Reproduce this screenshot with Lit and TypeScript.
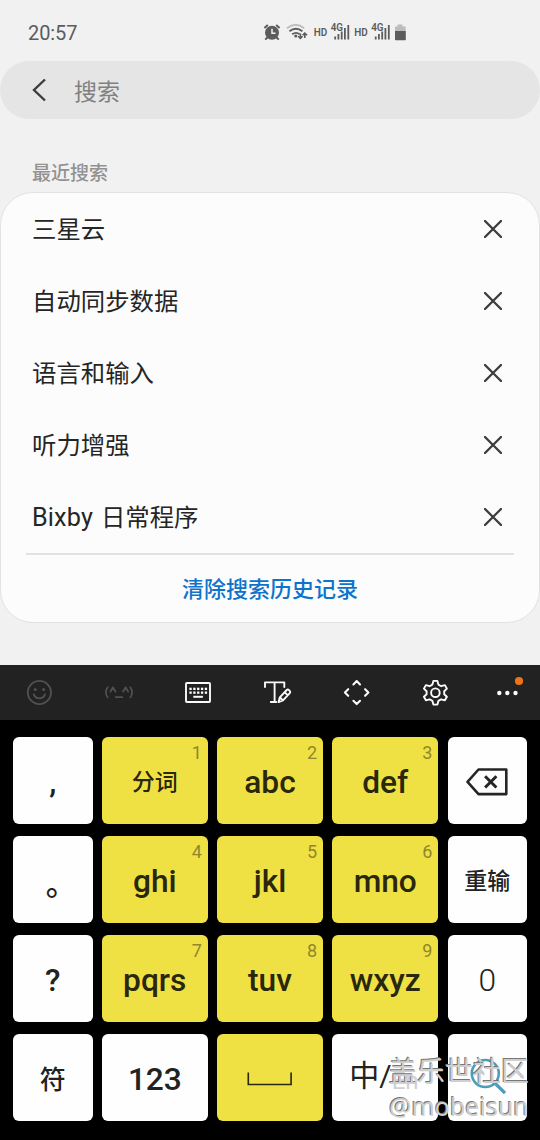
import { LitElement, html, svg, css } from "lit";
import { customElement } from "lit/decorators.js";
import { classMap } from "lit/directives/class-map.js";

interface Key {
  label?: string;
  num?: string;
  kind?: string;
  icon?: "backspace" | "space" | "search";
  accent?: boolean;
}

const RECENT = ["三星云", "自动同步数据", "语言和输入", "听力增强", "Bixby 日常程序"];

const KEYS: Key[] = [
  { label: ",", kind: "comma" },
  { label: "分词", num: "1", kind: "cjk", accent: true },
  { label: "abc", num: "2", accent: true },
  { label: "def", num: "3", accent: true },
  { icon: "backspace" },
  { label: "。", kind: "stop" },
  { label: "ghi", num: "4", accent: true },
  { label: "jkl", num: "5", accent: true },
  { label: "mno", num: "6", accent: true },
  { label: "重输", kind: "cjk" },
  { label: "?", kind: "question" },
  { label: "pqrs", num: "7", accent: true },
  { label: "tuv", num: "8", accent: true },
  { label: "wxyz", num: "9", accent: true },
  { label: "0", kind: "zero" },
  { label: "符", kind: "symbol" },
  { label: "123", kind: "digits" },
  { icon: "space", accent: true },
  { kind: "lang" },
  { icon: "search" },
];

@customElement("status-bar")
class StatusBar extends LitElement {
  static styles = css`
    :host { display: flex; height: 61px; font-family: Roboto, sans-serif; color: #5c5c5c; }
    .time { padding: 21px 0 0 28px; width: 235px; box-sizing: border-box; font-size: 20px; line-height: 24px; letter-spacing: -0.1px; }
    svg { display: block; margin-left: 20px; }
    text { font-family: Roboto, sans-serif; font-weight: 600; fill: #5c5c5c; }
  `;
  signal(x: number) {
    return svg`<g transform="translate(${x} 0)">
      <text x="0" y="35.7" font-size="10.5" textLength="13.5" lengthAdjust="spacingAndGlyphs">HD</text>
      <text x="17" y="31.2" font-size="10.5" textLength="12.4" lengthAdjust="spacingAndGlyphs">4G</text>
      <path d="M21.5 39.5v-3M24.7 39.5v-5.5M28 39.5v-8M31.2 39.5v-11.5M34.6 39.5v-14.5" stroke="#5c5c5c" stroke-width="1.8"/>
    </g>`;
  }
  render() {
    return html`
      <div class="time">20:57</div>
      <svg width="160" height="61" viewBox="255 0 160 61" fill="none">
        <circle cx="272" cy="32.7" r="7" fill="#5c5c5c"/>
        <path d="M272 28.7v4.6h3.5" stroke="#f1f1f1" stroke-width="1.5"/>
        <path d="M264.4 28l3.4-3M279.6 28l-3.4-3" stroke="#5c5c5c" stroke-width="2"/>
        <path d="M267.3 37.5l-2 2.2M276.7 37.5l2 2.2" stroke="#5c5c5c" stroke-width="2"/>
        <path d="M287 28.2q8.6-6.8 17.2 0" stroke="#bdbdbd" stroke-width="2"/>
        <path d="M289.4 31.2q6.5-4.8 13 0M292.2 34.3q4-2.8 7.4 0" stroke="#5c5c5c" stroke-width="1.9"/>
        <circle cx="295.8" cy="36" r="1.6" fill="#5c5c5c"/>
        <path d="M300.4 33.5v4.8M298.2 36.2l2.2 2.2 2.2-2.2M304.8 38v-4.8M302.6 35.3l2.2-2.2 2.2 2.2" stroke="#5c5c5c" stroke-width="1.6"/>
        ${this.signal(313.7)}${this.signal(354.2)}
        <path d="M397.5 24.6h5v2h3.2v4.6h-10.7v-4.6h2.5z" fill="#bcbcbc"/>
        <path d="M395 31h10.8v8.4q0 .8-.8.8h-9.2q-.8 0-.8-.8z" fill="#5c5c5c"/>
      </svg>`;
  }
}

@customElement("recent-list")
class RecentList extends LitElement {
  static styles = css`
    :host { display: block; box-sizing: border-box; height: 431px; border: 1px solid #e2e2e2; border-radius: 33px; background: #fcfcfc; font-family: Roboto, "Noto Sans CJK SC", sans-serif; color: #252525; }
    .row { display: flex; align-items: center; justify-content: space-between; height: 72px; padding: 0 37px 0 31px; box-sizing: border-box; font-size: 24.4px; line-height: 36px; }
    .row span { padding-top: 1px; }
    .latin { font-size: 25.2px; letter-spacing: 0.15px; margin-right: 1.5px; }
    .line { height: 1.5px; margin: 0 25px; background: #e2e2e2; }
    .clear { text-align: center; color: #0d73cb; font-size: 22px; font-weight: 500; line-height: 32px; padding-top: 19px; }
    svg { display: block; margin-top: -1px; }
  `;
  label(t: string) {
    const m = t.match(/^([A-Za-z]+ )(.*)$/);
    return m ? html`<span class="latin">${m[1]}</span>${m[2]}` : t;
  }
  render() {
    return html`
      ${RECENT.map((t) => html`<div class="row"><span>${this.label(t)}</span>
        <svg width="18" height="18" viewBox="0 0 18 18"><path d="M1 1l16 16M17 1L1 17" stroke="#3c3c3c" stroke-width="2.3" stroke-linecap="round"/></svg></div>`)}
      <div class="line"></div>
      <div class="clear">清除搜索历史记录</div>`;
  }
}

@customElement("key-tools")
class KeyTools extends LitElement {
  static styles = css`
    :host { display: block; height: 55px; background: #222; }
    svg { display: block; }
  `;
  render() {
    const dots = [0, 1, 2, 3, 4].flatMap((i) =>
      [688.8, 692.6].map((y) => svg`<rect x=${189.4 + i * 3.85} y=${y - 1.1} width="2.3" height="2.3" fill="#fff" stroke="none"/>`));
    const gear = "M432.6 685.2l1-3.7h4l1 3.7 2.8 1.6 3.7-1.1 2 3.5-2.7 2.6v3l2.7 2.6-2 3.5-3.7-1-2.8 1.6-1 3.7h-4l-1-3.7-2.8-1.6-3.7 1-2-3.5 2.7-2.6v-3l-2.7-2.6 2-3.5 3.7 1.1z";
    return html`
      <svg width="540" height="55" viewBox="0 665 540 55" fill="none" stroke="#fafafa" stroke-width="1.9" stroke-linecap="round" stroke-linejoin="round">
        <g stroke="#505050"><circle cx="39.4" cy="692.5" r="11.6"/><path d="M33.8 694.3q1.5 4 5.6 4t5.6-4"/></g>
        <circle cx="35.2" cy="689.6" r="1.5" fill="#505050" stroke="none"/><circle cx="43.6" cy="689.6" r="1.5" fill="#505050" stroke="none"/>
        <g stroke="#505050" stroke-width="1.7"><path d="M107.7 687.2q-3.6 5 0 10.2M130.3 687.2q3.6 5 0 10.2M110.4 691.7l2.6-4.4 2.6 4.4M123 691.7l2.6-4.4 2.6 4.4M115.6 697.2h6.7"/></g>
        <rect x="186" y="683" width="24" height="19" rx="0.8"/>${dots}
        <path d="M193.3 696.8h9.6" stroke-width="2" stroke-linecap="butt"/>
        <path d="M265 687v-4.6h19.3v4.6M274.6 682.4v19.5M270.8 702h5.5M278.6 702.1l1.2-4.8 6.9-7.3q1.1-1 2.3.1l.7.7q1.1 1.2.1 2.3l-6.8 7.3zM279.8 697.3l3.2 3.1M284.7 692.3l2.9 2.8"/>
        <path d="M353.4 684.4l3.3-3.3 3.3 3.3M353.4 700.8l3.3 3.3 3.3-3.3M348.2 689.2l-3.3 3.3 3.3 3.3M365.1 689.2l3.3 3.3-3.3 3.3" stroke-width="2.1"/>
        <path d=${gear} transform="translate(-.2 -.6)"/><circle cx="435.4" cy="692.7" r="4.3"/>
        <g stroke="none" fill="#fafafa"><circle cx="499.3" cy="693" r="2.2"/><circle cx="507.3" cy="693" r="2.2"/><circle cx="515.5" cy="693" r="2.2"/><circle cx="519" cy="681" r="4.1" fill="#ee7219"/></g>
      </svg>`;
  }
}

@customElement("key-pad")
class KeyPad extends LitElement {
  static styles = css`
    :host { display: grid; box-sizing: border-box; grid-template-columns: 79.5px repeat(3, 106px) 79.5px; grid-auto-rows: 87.4px; gap: 11.6px 9.25px; padding: 17px 13px 0; background: #000; font-family: Roboto, "Noto Sans CJK SC", sans-serif; color: #222; }
    .key { display: flex; position: relative; align-items: center; justify-content: center; border-radius: 6px; background: #fefefe; font-size: 31.7px; line-height: 40px; font-weight: 500; padding-top: 4px; box-sizing: border-box; }
    .accent { background: #efe144; color: #29270c; }
    .num { position: absolute; right: 6px; top: 5px; font-size: 18px; line-height: 21px; font-weight: 400; color: #8f872b; }
    .cjk { font-size: 23px; }
    .comma { padding-top: 5px; }
    .stop { font-size: 31px; padding: 11px 0 0 17px; }
    .symbol { font-size: 26px; }
    .digits { letter-spacing: -0.1px; }
    .zero { font-weight: 300; }
    .lang { font-weight: 400; font-size: 30px; justify-content: flex-start; padding: 0 0 4px 17px; }
    .en { font-size: 24px; color: #d0d0d0; padding-top: 11px; }
    svg { display: block; margin-top: -2px; }
    .lens { margin-top: -5px; }
  `;
  icon(name?: string) {
    if (name === "backspace")
      return html`<svg width="42" height="28" viewBox="0 0 42 28" fill="none" stroke="#252525" stroke-width="2.6" stroke-linejoin="round"><path d="M12.5 1.5H40.3v24.6H12.5L1.5 13.8z"/><path d="M19.1 8.3l11.3 11.2M30.4 8.3L19.1 19.5" stroke-width="3"/></svg>`;
    if (name === "space")
      return html`<svg width="46" height="16" viewBox="0 0 46 16" fill="none"><path d="M1.3 1.5v12h42.8v-12" stroke="#29270c" stroke-width="1.6"/></svg>`;
    return html`<svg class="lens" width="38" height="38" viewBox="0 0 38 38" fill="none" stroke="#4c9cbc" stroke-width="2.6"><circle cx="17.3" cy="15.5" r="13.5"/><path d="M26.7 25l10.3 10" stroke-width="3.2"/></svg>`;
  }
  render() {
    return KEYS.map((k) => html`
      <div class=${classMap({ key: true, accent: !!k.accent, [k.kind ?? "plain"]: true })}>
        ${k.kind === "lang" ? html`<span>中/</span><span class="en">En</span>` : k.icon ? this.icon(k.icon) : k.label}
        ${k.num ? html`<span class="num">${k.num}</span>` : ""}
      </div>`);
  }
}

@customElement("app-root")
class AppRoot extends LitElement {
  static styles = css`
    :host { display: flex; flex-direction: column; position: relative; width: 540px; height: 1140px; overflow: hidden; background: #f1f1f1; font-family: Roboto, "Noto Sans CJK SC", sans-serif; }
    .search { display: flex; align-items: center; height: 58px; border-radius: 29px; background: #e5e5e5; color: #808080; font-size: 23px; padding-left: 31px; box-sizing: border-box; }
    .search svg { margin-right: 27px; }
    .title { height: 73px; box-sizing: border-box; padding: 41px 0 0 32px; font-size: 19px; line-height: 28px; font-weight: 500; color: #929292; }
    .keyboard { display: flex; flex-direction: column; flex: 1; margin-top: 42px; background: #000; }
    key-pad { flex: 1; }
    .mark { position: absolute; left: 389px; top: 1052px; font-family: "Noto Sans CJK SC", sans-serif; font-size: 28px; line-height: 36px; color: #cfcfcf; text-shadow: -1px -1px 0 #777; white-space: nowrap; }
    .handle { font-family: "Noto Sans", sans-serif; font-size: 25px; }
  `;
  render() {
    return html`
      <status-bar></status-bar>
      <div class="search">
        <svg width="16" height="24" viewBox="0 0 16 24" fill="none"><path d="M14 1.5L3 12l11 10.5" stroke="#3c3c3c" stroke-width="2.4"/></svg>
        <span>搜索</span>
      </div>
      <div class="title">最近搜索</div>
      <recent-list></recent-list>
      <div class="keyboard"><key-tools></key-tools><key-pad></key-pad></div>
      <div class="mark"><div>盖乐世社区</div><div class="handle">@mobeisun</div></div>`;
  }
}
